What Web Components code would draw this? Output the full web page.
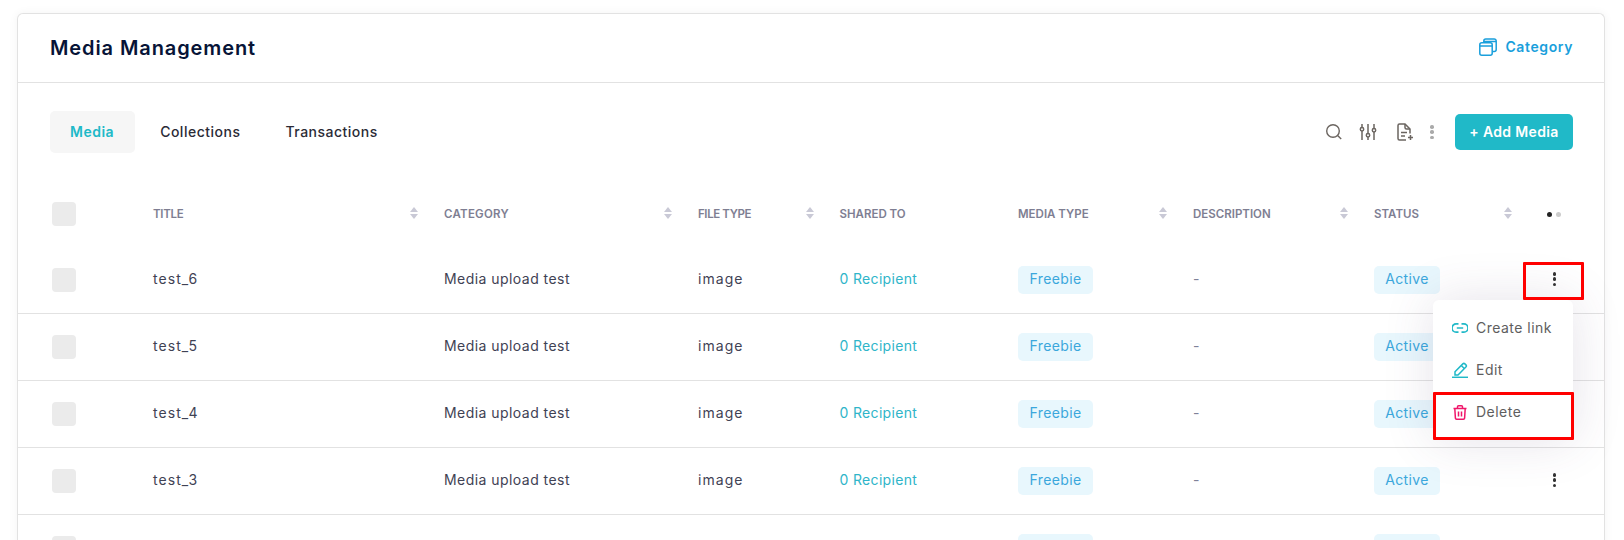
<!DOCTYPE html>
<html lang="en"><head><meta charset="utf-8"><title>Media Management</title>
<style>
html,body{margin:0;padding:0;height:540px;overflow:hidden;background:#fff;font-family:Inter,"Noto Sans",sans-serif;}
</style></head><body>
<media-page></media-page>
<script>
const ICONS={
 category:'<svg width="18" height="18" viewBox="0 0 18 18" fill="none" stroke="currentColor" stroke-width="1.5"><rect x=".8" y="4.8" width="12.4" height="12.4" rx="2"/><path d="M.8 8h12.4M4.8 4.6V3A2 2 0 0 1 6.8 1h8.4a2 2 0 0 1 2 2v8.4a2 2 0 0 1-2 2h-1.800M4.800 3.600h12.200"/></svg>',
 search:'<svg width="18" height="18" viewBox="0 0 18 18" fill="none" stroke="currentColor" stroke-width="1.4"><circle cx="8" cy="8" r="6.3"/><path d="M12.6 12.6l3.6 3.4"/></svg>',
 filter:'<svg width="18" height="18" viewBox="0 0 18 18" fill="none" stroke="currentColor" stroke-width="1.5"><path d="M3 1v3.500M3 8v9M9 1v9.500M9 14v3M15 1v4.500M15 9v8"/><circle cx="3" cy="6.200" r="1.700"/><circle cx="9" cy="12.200" r="1.700"/><circle cx="15" cy="7.200" r="1.700"/></svg>',
 doc:'<svg width="18" height="18" viewBox="0 0 18 18" fill="none" stroke="currentColor" stroke-width="1.5"><path d="M10 17H3.500A1.500 1.500 0 0 1 2 15.500V2.500A1.500 1.500 0 0 1 3.500 1H9l5 5v4.500"/><path d="M9 1v3.500A1.500 1.500 0 0 0 10.500 6H14M5 9.500h6M5 13h4M12 14.500h5M14.500 12v5"/></svg>',
 link:'<svg width="16" height="12" viewBox="0 0 16 12" fill="none" stroke="currentColor" stroke-width="1.700"><path d="M6.500 1.800H4.200a4.200 4.200 0 0 0 0 8.400h2.300M9.500 1.800h2.300a4.200 4.200 0 0 1 0 8.400H9.500M4.800 6h6.400"/></svg>',
 edit:'<svg width="16" height="16" viewBox="0 0 16 16" fill="none" stroke="currentColor" stroke-width="1.500"><path d="M3 9.800L10.800 1.900a1.500 1.500 0 0 1 2.100 0l1 1a1.500 1.500 0 0 1 0 2.100L6 13H3z"/><path d="M9.300 3.500l3 3"/><path d="M0 15.300h16" stroke-width="1.500"/></svg>',
 trash:'<svg width="14" height="15" viewBox="0 0 14 15" fill="none" stroke="currentColor" stroke-width="1.500"><path d="M.5 3.500h13M4.500 3.500V1.800a1 1 0 0 1 1-1h3a1 1 0 0 1 1 1v1.700M1.800 3.500l.6 9.600a1.200 1.200 0 0 0 1.200 1.100h6.800a1.200 1.200 0 0 0 1.200-1.100l.6-9.600M5.500 6.500v5M8.500 6.500v5"/></svg>'
};
function def(name,css,html){
  customElements.define(name,class extends HTMLElement{
    constructor(){super();this.attachShadow({mode:'open'});}
    connectedCallback(){
      const a=n=>this.getAttribute(n)||'';
      this.shadowRoot.innerHTML='<style>'+css+'</style>'+(typeof html==='function'?html(a,this):html);
    }
  });
}
def('svg-icon',':host{display:inline-flex;line-height:0;color:inherit}',a=>ICONS[a('name')]);
def('card-header',`:host{display:flex;align-items:center;justify-content:space-between;height:68px;padding:0 31px 0 32px;border-bottom:1px solid #e2e2e2}
 h1{margin:0;font:600 20px/1 Inter,sans-serif;color:#071437;letter-spacing:.9px}
 a{display:flex;align-items:center;gap:8px;color:#1a9fdc;font:600 14px/1 Inter,sans-serif;letter-spacing:.6px;margin-bottom:2px}`,
 a=>`<h1>${a('heading')}</h1><a><svg-icon name="category"></svg-icon><span>${a('action')}</span></a>`);
def('tab-item',`:host{display:flex;align-items:center;height:42px;padding:0 20px;border-radius:5px;font:500 14px/1 Inter,sans-serif;color:#2b2b36;letter-spacing:.5px}
 :host([active]){background:#f6f6f6;color:#20b9c8;font-weight:600;letter-spacing:.5px;padding-right:21px}`,'<slot></slot>');
def('add-button',`:host{display:flex;align-items:center;justify-content:center;width:118px;height:36px;border-radius:5px;background:#20b9c8;color:#fff;font:600 14px/1 Inter,sans-serif;letter-spacing:.35px}`,'<slot></slot>');
def('v-dots',`:host{display:flex;flex-direction:column;align-items:center;justify-content:space-between;width:4px;height:14px}
 i{display:block;width:3.500px;height:3.500px;border-radius:50%;background:var(--dot,#333)}`,'<i></i><i></i><i></i>');
def('tool-bar',`:host{display:flex;align-items:center;justify-content:space-between;height:42px;padding:28px 31px 0 32px}
 .tabs{display:flex;gap:5px}.tools{display:flex;align-items:center;color:#6b6560}
 svg-icon:nth-child(2){margin-left:16px}svg-icon:nth-child(3){margin-left:19px}
 v-dots{--dot:#aaa;margin:0 21px 0 16px}`,
 `<div class="tabs"><slot></slot></div><div class="tools"><svg-icon name="search"></svg-icon><svg-icon name="filter"></svg-icon><svg-icon name="doc"></svg-icon><v-dots></v-dots><add-button>+ Add Media</add-button></div>`);
def('sort-arrows',`:host{display:flex;flex-direction:column;gap:2px;flex:none;margin-top:-2px}
 i{display:block;width:0;height:0;border-left:4px solid transparent;border-right:4px solid transparent}
 i:first-of-type{border-bottom:5px solid #c9c9d6}i:last-of-type{border-top:5px solid #c9c9d6}`,'<i></i><i></i>');
def('head-cell',`:host{display:flex;align-items:center;justify-content:space-between;padding-right:26px;font:600 11.500px/1 Inter,sans-serif;color:#7e7e92;white-space:nowrap}
 span{letter-spacing:var(--ls,0);position:relative;top:1px}`,
 (a,el)=>`<span><slot></slot></span>${el.hasAttribute('nosort')?'':'<sort-arrows></sort-arrows>'}`);
def('check-box',`:host{display:block;width:24px;height:24px;border-radius:4px;background:#ebebeb}`,'');
def('table-head',`:host{display:grid;grid-template-columns:var(--cols);align-items:center;height:66px;padding-left:34px}
 .d{display:flex;gap:4px;margin-left:9.500px}.d i{width:5px;height:5px;border-radius:50%;background:#222}.d i+i{background:#ccc}`,
 `<check-box></check-box><head-cell style="--ls:-.3px">TITLE</head-cell><head-cell style="--ls:.25px">CATEGORY</head-cell><head-cell style="--ls:-.4px">FILE TYPE</head-cell><head-cell nosort>SHARED TO</head-cell><head-cell>MEDIA TYPE</head-cell><head-cell>DESCRIPTION</head-cell><head-cell>STATUS</head-cell><div class="d"><i></i><i></i></div>`);
def('tag-chip',`:host{display:inline-flex;align-items:center;justify-content:center;box-sizing:border-box;height:28px;padding-bottom:2px;border-radius:5px;background:#e8f7fd;color:#3ba7dc;font:400 14px/1 Inter,sans-serif;letter-spacing:.38px;white-space:nowrap}`,'<slot></slot>');
def('table-row',`:host{display:grid;grid-template-columns:var(--cols);align-items:center;height:66px;padding-left:34px;border-bottom:1px solid #e2e2e2;font:400 14px/1 Inter,sans-serif;color:#3f4254;letter-spacing:.45px}
 .t{letter-spacing:1.05px;margin-top:-2px}.u,.n{margin-top:-2px}.n{letter-spacing:1.05px}.r{color:#2fb5c9;letter-spacing:.33px;margin-top:-2px}.m{color:#7e8299;margin-top:-2px}tag-chip.f{width:75px}tag-chip.s{width:66px}
 .b{line-height:0}
 v-dots{margin:-2px 0 0 15px}`,
 a=>{const t=a('name');return `<check-box></check-box><div class="t">${t}</div><div class="u">${t?'Media upload test':''}</div><div class="n">${t?'image':''}</div><div class="r">${t?'0 Recipient':''}</div><div class="b"><tag-chip class="f">${t?'Freebie':''}</tag-chip></div><div class="m">${t?'-':''}</div><div class="b"><tag-chip class="s">${t?'Active':''}</tag-chip></div><v-dots></v-dots>`});
def('menu-item',`:host{display:flex;align-items:center;height:42px;padding-left:19px;font:400 14px/1 Inter,sans-serif;color:#5e5e5e;letter-spacing:.48px;white-space:nowrap}
 .i{display:flex;justify-content:center;width:16px;margin-right:8px;color:var(--ic)}`,
 a=>`<span class="i"><svg-icon name="${a('icon')}"></svg-icon></span><slot></slot>`);
def('action-menu',`:host{position:absolute;top:119px;right:31px;width:140px;padding:7px 0;background:#fff;border-radius:6px;box-shadow:0 0 50px 0 rgba(82,63,105,.15);box-sizing:border-box}`,'<slot></slot>');
def('mark-box',`:host{position:absolute;box-sizing:border-box;border:3px solid #f00;border-radius:1px;pointer-events:none}`,'');
def('media-table',`:host{display:block;position:relative;margin-top:28px;--cols:101px 291px 254px 141.500px 178.500px 175px 181px 163.500px 66px}`,
 `<table-head></table-head><slot></slot>
  <action-menu>
   <menu-item icon="link" style="--ic:#20b9c8">Create link</menu-item>
   <menu-item icon="edit" style="--ic:#20b9c8">Edit</menu-item>
   <menu-item icon="trash" style="--ic:#f0166a">Delete</menu-item>
  </action-menu>
  <mark-box style="left:1505px;top:81px;width:61px;height:38px"></mark-box>
  <mark-box style="left:1415px;top:211px;width:141px;height:48px"></mark-box>`);
def('media-page',`:host{display:block;margin:13px 19px 0 17px;border:1px solid #e2e2e2;border-bottom:0;border-radius:6px 6px 0 0;box-shadow:0 0 10px rgba(0,0,0,.05);background:#fff;font-family:Inter,sans-serif}`,
 `<card-header heading="Media Management" action="Category"></card-header>
  <tool-bar><tab-item active>Media</tab-item><tab-item>Collections</tab-item><tab-item>Transactions</tab-item></tool-bar>
  <media-table><table-row name="test_6"></table-row><table-row name="test_5"></table-row><table-row name="test_4"></table-row><table-row name="test_3"></table-row><table-row></table-row></media-table>`);
</script>
</body></html>
